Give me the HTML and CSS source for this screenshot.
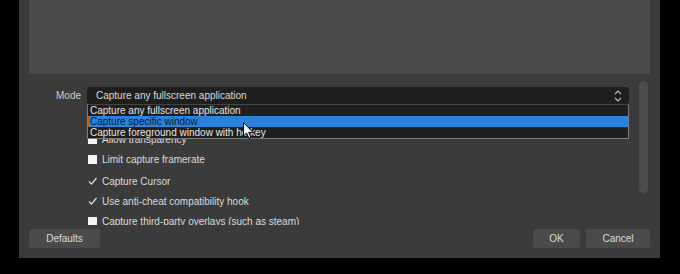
FILE: index.html
```html
<!DOCTYPE html>
<html lang="en">
<head>
  <meta charset="UTF-8" />
  <title>Game Capture Properties</title>
  <link rel="stylesheet" href="styles.css">
</head>
<body>
  <div class="dialog">
    <div class="preview"></div>

    <div class="props">
      <div class="form">
        <div class="row">
          <span class="label">Mode</span>
          <div class="combo">
            <span>Capture any fullscreen application</span>
            <svg class="arrows" width="8" height="12" viewBox="0 0 8 12">
              <path d="M1 4 L4 1 L7 4" fill="none" stroke="#bdbdbd" stroke-width="1.2"/>
              <path d="M1 8 L4 11 L7 8" fill="none" stroke="#bdbdbd" stroke-width="1.2"/>
            </svg>
          </div>
        </div>

        <div class="checks">
          <label class="check"><span class="box"></span>Allow transparency</label>
          <label class="check first"><span class="box"></span>Limit capture framerate</label>
          <label class="check"><span class="box on"><svg width="9" height="9" viewBox="0 0 9 9"><path d="M1 4.5 L3.5 7 L8.5 1" fill="none" stroke="#d6d6d6" stroke-width="1.3"/></svg></span>Capture Cursor</label>
          <label class="check"><span class="box on"><svg width="9" height="9" viewBox="0 0 9 9"><path d="M1 4.5 L3.5 7 L8.5 1" fill="none" stroke="#d6d6d6" stroke-width="1.3"/></svg></span>Use anti-cheat compatibility hook</label>
          <label class="check"><span class="box"></span>Capture third-party overlays (such as steam)</label>
        </div>
      </div>
      <div class="scrollbar"></div>

      <!-- open combo list -->
      <ul class="popup">
        <li>Capture any fullscreen application</li>
        <li class="sel">Capture specific window</li>
        <li>Capture foreground window with hotkey</li>
      </ul>
    </div>

    <div class="footer">
      <button class="btn defaults">Defaults</button>
      <span class="spacer"></span>
      <button class="btn ok">OK</button>
      <button class="btn cancel">Cancel</button>
    </div>

    <svg class="pointer" width="12" height="18" viewBox="0 0 12 18">
      <path d="M0.5 0.5 L0.5 14 L3.6 11 L6 16.5 L8 15.6 L5.7 10.4 L10 10.4 Z" fill="#fff" stroke="#000" stroke-width="1"/>
    </svg>
  </div>
</body>
</html>
```

FILE: styles.css
```css
body {
  margin: 0;
  background: #000;
  font-family: "Liberation Sans", Arial, sans-serif;
  font-size: 10px;
  color: #dcdcdc;
}

.dialog {
  position: relative;
  margin-left: 19px;
  width: 641px;
  height: 258px;
  box-sizing: border-box;
  padding: 0 10px 10px;
  background: #3b3b3b;
  display: flex;
  flex-direction: column;
}

.preview {
  height: 74px;
  background: #4b4b4b;
}

.props {
  position: relative;
  height: 151px;
  display: flex;
  overflow: hidden;
}

.form {
  flex: 1;
  padding-top: 13px;
}

.row {
  display: flex;
  align-items: center;
}

.label {
  width: 52px;
  text-align: right;
  margin-right: 6px;
  color: #cfcfcf;
}

.combo {
  width: 542px;
  height: 17px;
  box-sizing: border-box;
  background: #1f1f1f;
  border-radius: 3px;
  padding: 0 6px 0 9px;
  display: flex;
  align-items: center;
  justify-content: space-between;
}

.arrows {
  margin-right: 1px;
}

.checks {
  margin-top: 25px;
  padding-left: 59px;
  display: flex;
  flex-direction: column;
}

.check {
  height: 20px;
  display: flex;
  align-items: center;
}

.check.first {
  margin-bottom: 2px;
}

.box {
  width: 9px;
  height: 9px;
  margin-right: 5px;
  background: #f4f4f4;
  display: flex;
}

.box.on {
  background: transparent;
}

.scrollbar {
  width: 9px;
  margin: 7px 2px 0 10px;
  height: 112px;
  background: #4c4c4c;
  border-radius: 5px;
}

.popup {
  position: absolute;
  z-index: 5;
  left: 58px;
  top: 30px;
  width: 542px;
  height: 35px;
  box-sizing: border-box;
  margin: 0;
  padding: 0;
  list-style: none;
  background: #1f1f1f;
  border: 1px solid #7c7c7c;
  border-top-color: #444;
}

.popup li {
  height: 11px;
  line-height: 11px;
  padding-left: 2px;
  color: #e6e6e6;
}

.popup li.sel {
  background: #2a82da;
  color: #0a1a33;
  outline: 1px dotted #b06a2a;
  outline-offset: -1px;
}

.footer {
  margin-top: 4px;
  display: flex;
  gap: 6px;
}

.spacer {
  flex: 1;
}

.btn {
  height: 19px;
  padding: 0;
  border: none;
  border-radius: 3px;
  background: #4a4a4a;
  color: #dcdcdc;
  font-family: inherit;
  font-size: 10px;
}

.defaults {
  width: 71px;
}

.ok {
  width: 47px;
}

.cancel {
  width: 64px;
}

.pointer {
  position: absolute;
  z-index: 6;
  left: 224px;
  top: 122px;
}
```
